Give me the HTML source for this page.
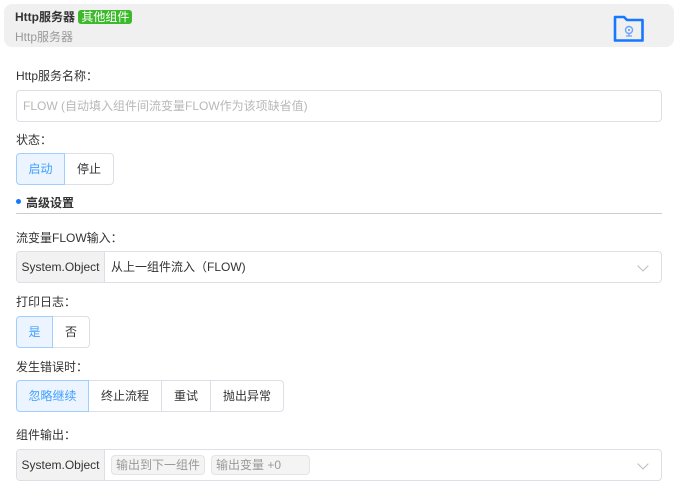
<!DOCTYPE html>
<html><head><meta charset="utf-8"><style>
*{box-sizing:border-box;margin:0;padding:0}
body{width:678px;height:485px;background:#fff;font-family:"Liberation Sans","Noto Sans CJK SC",sans-serif;font-size:12px;color:#333;position:relative;overflow:hidden}
.abs{position:absolute}
.hdr{left:4px;top:4px;width:670px;height:43px;background:#f0f0f0;border-radius:8px}
.lbl{left:16px;font-size:12px;color:#333}
.input{left:16px;width:646px;height:32px;border:1px solid #dcdfe6;border-radius:4px;padding-left:6px;line-height:30px;color:#b8b8b8}
.grp{display:flex;height:32px}
.grp div{border:1px solid #dcdfe6;border-left:none;line-height:30px;text-align:center;color:#333}
.grp div:first-child{border:1px solid #a0cfff;background:#ecf5ff;color:#409eff;border-radius:4px 0 0 4px}
.grp div:last-child{border-radius:0 4px 4px 0}
.sel{left:16px;width:646px;height:32px;border:1px solid #dcdfe6;border-radius:4px;display:flex;line-height:30px}
.pre{width:88px;background:#f2f2f2;border-right:1px solid #dcdfe6;text-align:center;color:#333;border-radius:4px 0 0 4px}
.tag{display:inline-block;height:20px;line-height:18px;margin-top:5px;border:1px solid #e4e4e4;background:#f4f4f5;border-radius:4px;color:#999;padding:0 4px;margin-left:6px}
.arrow{position:absolute;right:14px;top:10px;width:8px;height:8px;border-right:1px solid #bbb;border-bottom:1px solid #bbb;transform:rotate(45deg)}
</style></head><body>
<div class="abs hdr"></div>
<div class="abs" style="left:15px;top:8px;font-size:12px;font-weight:bold;color:#333">Http服务器 <span style="background:#3cba2b;color:#fff;font-weight:normal;border-radius:3px;padding:0 3px;font-size:12px">其他组件</span></div>
<div class="abs" style="left:15px;top:28px;color:#999">Http服务器</div>
<svg class="abs" style="left:613px;top:15px" width="32" height="27" viewBox="0 0 32 27"><path d="M2 2H11L14 5H29.5V25.5H2Z" fill="none" stroke="#1677ff" stroke-width="2.6" stroke-linejoin="round"/><circle cx="16" cy="15" r="3.5" fill="none" stroke="#6aa3ff" stroke-width="1.4"/><circle cx="16" cy="15" r="1.1" fill="#6aa3ff"/><path d="M16 19v2M13 21h6" stroke="#6aa3ff" stroke-width="1.3"/></svg>

<div class="abs lbl" style="top:67px">Http服务名称：</div>
<div class="abs input" style="top:90px">FLOW (自动填入组件间流变量FLOW作为该项缺省值)</div>

<div class="abs lbl" style="top:131px">状态：</div>
<div class="abs grp" style="left:16px;top:153px"><div style="width:49px">启动</div><div style="width:49px">停止</div></div>

<div class="abs" style="left:16px;top:199px;width:5px;height:5px;border-radius:50%;background:#1677ff"></div>
<div class="abs" style="left:26px;top:194px;font-weight:bold">高级设置</div>
<div class="abs" style="left:16px;top:213px;width:646px;height:1px;background:#ccc"></div>

<div class="abs lbl" style="top:229px">流变量FLOW输入：</div>
<div class="abs sel" style="top:251px"><div class="pre">System.Object</div><div style="padding-left:6px">从上一组件流入（FLOW)</div><span class="arrow"></span></div>

<div class="abs lbl" style="top:293px">打印日志：</div>
<div class="abs grp" style="left:16px;top:316px"><div style="width:37px">是</div><div style="width:37px">否</div></div>

<div class="abs lbl" style="top:358px">发生错误时：</div>
<div class="abs grp" style="left:16px;top:380px"><div style="width:73px">忽略继续</div><div style="width:73px">终止流程</div><div style="width:49px">重试</div><div style="width:73px">抛出异常</div></div>

<div class="abs lbl" style="top:426px">组件输出：</div>
<div class="abs sel" style="top:449px"><div class="pre">System.Object</div><span class="tag">输出到下一组件</span><span class="tag" style="width:99px">输出变量 +0</span><span class="arrow"></span></div>
</body></html>
